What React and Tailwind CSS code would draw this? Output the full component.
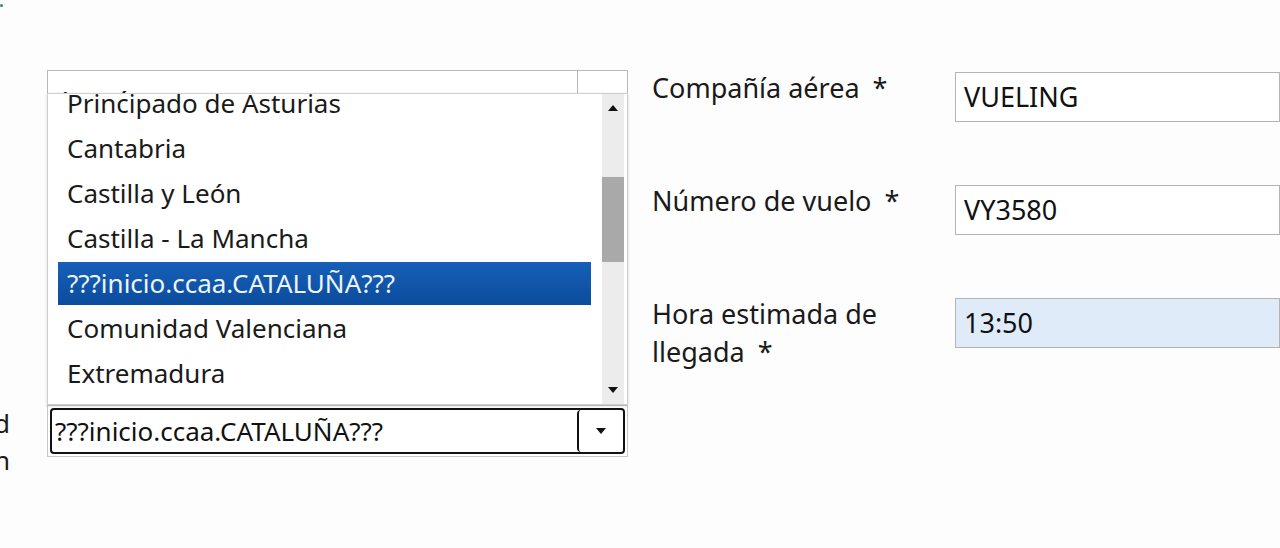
import React from "react";

const regions = [
    "Principado de Asturias",
    "Cantabria",
    "Castilla y León",
    "Castilla - La Mancha",
    "???inicio.ccaa.CATALUÑA???",
    "Comunidad Valenciana",
    "Extremadura",
];

const selected = "???inicio.ccaa.CATALUÑA???";

const Caret = ({ up = false, className = "" }) => (
    <svg className={className} width="10" height="6" viewBox="0 0 10 6" aria-hidden="true">
        <path d={up ? "M0 6 5 0l5 6z" : "M0 0h10L5 6z"} fill="#111" />
    </svg>
);

const Field = ({ label, value, tinted = false }) => (
    <div className="flex items-start">
        <div className="w-[303px] -mt-[3px] text-[27px] leading-[38px] text-[#1a1a1a]">{label}</div>
        <div
            className={`flex-1 h-[50px] border border-[#b4b4b4] flex items-center pl-[8px] text-[27px] text-[#111] ${
                tinted ? "bg-[#dfebf8]" : "bg-white"
            }`}
        >
            {value}
        </div>
    </div>
);

export default function App() {
    return (
        <div
            className="relative w-[1280px] h-[548px] overflow-hidden bg-[#fdfdfd] flex"
            style={{ fontFamily: '"Noto Sans", "Open Sans", sans-serif' }}
        >
            {/* stray mark at the top-left corner */}
            <div className="absolute left-0 top-[4px] w-[3px] h-[3px] rounded-full bg-[#2a8a7a]" />

            {/* left column: cut-off labels and the selects */}
            <div className="relative w-[640px] flex">
                <div className="w-[10px] pt-[405px] text-[26px] leading-[37px] text-[#1a1a1a]">
                    <div className="overflow-hidden flex justify-end whitespace-nowrap">Comunidad</div>
                    <div className="overflow-hidden flex justify-end whitespace-nowrap">destino n</div>
                </div>

                <div className="ml-[37px] w-[581px] flex flex-col">
                    {/* select behind the open list */}
                    <div className="mt-[70px] h-[46px] border border-[#b8b8b8] bg-white flex">
                        <div className="flex-1 pl-[9px] pt-[9px] text-[26px] leading-[40px] text-[#111]">Aragón</div>
                        <div className="w-[50px] border-l border-[#b8b8b8]" />
                    </div>

                    {/* the select that owns the list */}
                    <div className="mt-[289px] h-[52px] border border-[#c8c8c8] p-[2px] bg-white">
                        <div className="h-full flex border-2 border-[#111] rounded-[4px]">
                            <div className="flex-1 flex items-center pl-[3px] text-[26px] text-[#111]">{selected}</div>
                            <div className="w-[46px] flex items-center justify-center border-l-2 border-[#111] rounded-[4px]">
                                <Caret />
                            </div>
                        </div>
                    </div>
                </div>

                {/* open option list */}
                <div className="absolute left-[47px] top-[93px] w-[581px] h-[312px] bg-white border border-[#cfcfcf] shadow-[0_1px_3px_rgba(0,0,0,0.15)] overflow-hidden flex">
                    <div className="flex-1 pl-[10px] -mt-[13px]">
                        {regions.map((name) => (
                            <div key={name} className="h-[45px] flex items-center">
                                <div
                                    className={`w-[533px] h-[43px] flex items-center pl-[9px] text-[26px] ${
                                        name === selected
                                            ? "bg-gradient-to-b from-[#1660b8] to-[#0b4c9c] text-[#eef4ff]"
                                            : "text-[#1a1a1a]"
                                    }`}
                                >
                                    {name}
                                </div>
                            </div>
                        ))}
                    </div>
                    <div className="w-[22px] mr-[3px] bg-[#ececec] flex flex-col items-center">
                        <Caret up className="mt-[11px]" />
                        <div className="mt-[66px] w-full h-[85px] bg-[#a9a9a9]" />
                        <div className="flex-1" />
                        <Caret className="mb-[11px]" />
                    </div>
                </div>
            </div>

            {/* right column: flight fields */}
            <div className="flex-1 pl-[12px] pt-[72px] flex flex-col gap-[63px]">
                <Field label={<>Compañía aérea <span className="ml-[6px]">*</span></>} value="VUELING" />
                <Field label={<>Número de vuelo <span className="ml-[6px]">*</span></>} value="VY3580" />
                <Field
                    label={<>Hora estimada de<br />llegada <span className="ml-[6px]">*</span></>}
                    value="13:50"
                    tinted
                />
            </div>
        </div>
    );
}
